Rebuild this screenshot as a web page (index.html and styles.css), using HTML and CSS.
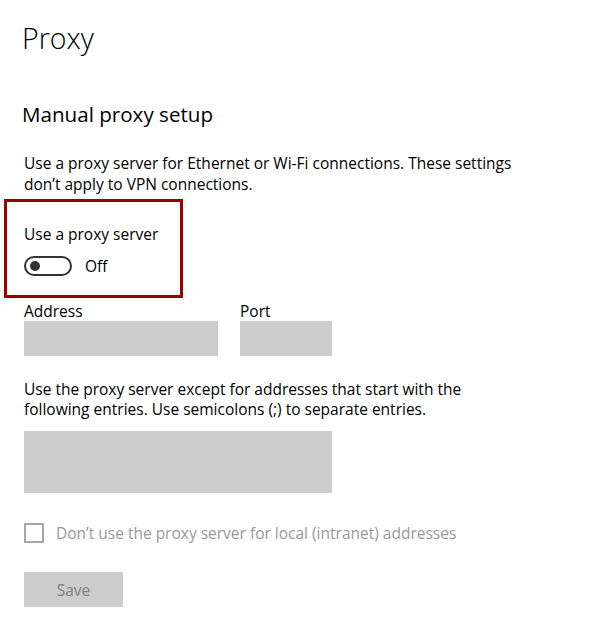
FILE: index.html
```html
<!DOCTYPE html>
<html lang="en">
<head>
<meta charset="utf-8">
<title>Proxy</title>
<link rel="stylesheet" href="styles.css">
</head>
<body>
<main class="page">
  <h1 class="title">Proxy</h1>
  <h2 class="section">Manual proxy setup</h2>
  <p class="desc">Use a proxy server for Ethernet or Wi-Fi connections. These settings don’t apply to VPN connections.</p>
  <div class="highlight">
    <div class="label">Use a proxy server</div>
    <div class="toggle-row">
      <span class="toggle"><span class="knob"></span></span>
      <span class="toggle-text">Off</span>
    </div>
  </div>
  <div class="fields">
    <div class="field">
      <div class="field-label">Address</div>
      <div class="input input-address"></div>
    </div>
    <div class="field">
      <div class="field-label">Port</div>
      <div class="input input-port"></div>
    </div>
  </div>
  <p class="desc desc-exceptions">Use the proxy server except for addresses that start with the following entries. Use semicolons (;) to separate entries.</p>
  <div class="input textarea"></div>
  <div class="check-row">
    <span class="checkbox"></span>
    <span class="check-text">Don’t use the proxy server for local (intranet) addresses</span>
  </div>
  <button class="save" type="button" disabled>Save</button>
</main>
</body>
</html>
```

FILE: styles.css
```css
* { box-sizing: border-box; }
html, body { margin: 0; padding: 0; background: #ffffff; }
body {
  font-family: "Open Sans", "Noto Sans", "Liberation Sans", sans-serif;
  color: #000;
  width: 598px;
  height: 635px;
  overflow: hidden;
}
.page {
  padding: 18px 0 0 24px;
  display: flex;
  flex-direction: column;
  align-items: flex-start;
}
.title {
  margin: 0 0 0 -2px;
  font-size: 28.5px;
  line-height: 40px;
  font-weight: 300;
}
.section {
  margin: 42px 0 0 -2px;
  font-size: 20.6px;
  line-height: 28px;
  font-weight: 400;
}
.desc {
  margin: 25px 0 0 0;
  font-size: 15.5px;
  line-height: 21px;
  width: 500px;
}
.highlight {
  margin: 4px 0 0 -20px;
  width: 179px;
  height: 99px;
  border: 3px solid #9a0000;
  padding: 22px 0 0 17px;
}
.label {
  font-size: 15.5px;
  line-height: 21px;
}
.toggle-row {
  margin-top: 11px;
  display: flex;
  align-items: center;
  height: 20px;
}
.toggle {
  width: 48px;
  height: 20px;
  border: 2px solid #333;
  border-radius: 10px;
  display: flex;
  align-items: center;
  padding-left: 4px;
}
.knob {
  width: 10px;
  height: 10px;
  border-radius: 50%;
  background: #333;
}
.toggle-text {
  margin-left: 13px;
  font-size: 15.5px;
  line-height: 20px;
}
.fields {
  margin-top: 3px;
  display: flex;
  gap: 22px;
}
.field-label {
  font-size: 15.5px;
  line-height: 20px;
}
.input { background: #cccccc; }
.input-address { width: 194px; height: 35px; }
.input-port { width: 92px; height: 35px; }
.desc-exceptions {
  margin-top: 23px;
  line-height: 20px;
  width: 470px;
}
.textarea {
  margin-top: 12px;
  width: 308px;
  height: 62px;
}
.check-row {
  margin-top: 30px;
  display: flex;
  align-items: center;
  height: 20px;
}
.checkbox {
  width: 20px;
  height: 20px;
  border: 2px solid #a6a6a6;
}
.check-text {
  margin-left: 12px;
  font-size: 15.5px;
  line-height: 18px;
  color: #999;
}
.save {
  margin-top: 29px;
  width: 99px;
  height: 35px;
  border: none;
  background: #cccccc;
  color: #808080;
  font-family: inherit;
  font-size: 15.5px;
  padding: 0;
}
```
